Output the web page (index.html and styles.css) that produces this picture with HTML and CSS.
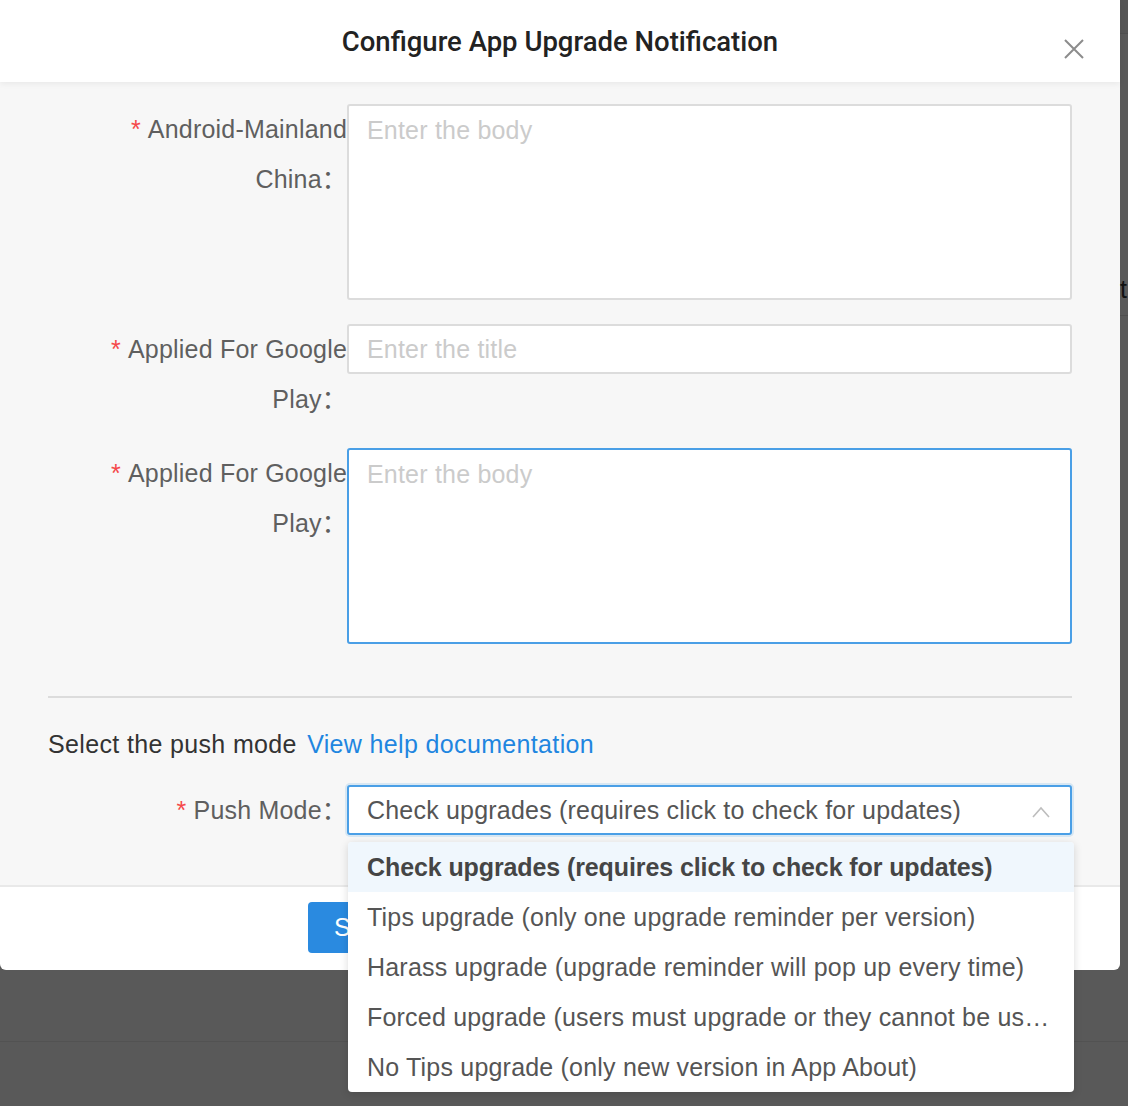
FILE: index.html
```html
<!DOCTYPE html>
<html lang="en">
<head>
    <meta charset="UTF-8">
    <meta name="viewport" content="width=device-width, initial-scale=1.0">
    <title>Configure App Upgrade Notification</title>
    <link rel="stylesheet" href="styles.css">
</head>
<body>

<div class="screen">
    <!-- Modal -->
    <div class="modal">
        <div class="modal-header">
            <h2 class="modal-title">Configure App Upgrade Notification</h2>
            <span class="modal-close">
                <svg width="20" height="20" viewBox="0 0 20 20">
                    <path d="M1 1 L19 19 M19 1 L1 19" stroke="#8c8c8c" stroke-width="2" fill="none"/>
                </svg>
            </span>
        </div>

        <div class="modal-body">
            <div class="form-row">
                <label class="form-label"><span class="req">*</span>Android-Mainland China：</label>
                <textarea class="form-textarea" placeholder="Enter the body"></textarea>
            </div>

            <div class="form-row">
                <label class="form-label"><span class="req">*</span>Applied For Google Play：</label>
                <input class="form-input" type="text" placeholder="Enter the title">
            </div>

            <div class="form-row">
                <label class="form-label"><span class="req">*</span>Applied For Google Play：</label>
                <textarea class="form-textarea hover" placeholder="Enter the body"></textarea>
            </div>

            <hr class="divider">

            <div class="section-title">
                Select the push mode <a class="help-link" href="#">View help documentation</a>
            </div>

            <div class="form-row last">
                <label class="form-label"><span class="req">*</span>Push Mode：</label>
                <div class="select-wrap">
                    <div class="select open">
                        <span class="select-value">Check upgrades (requires click to check for updates)</span>
                        <svg class="select-arrow" width="18" height="12" viewBox="0 0 18 12">
                            <path d="M1 11 L9 2 L17 11" stroke="#bdbdbd" stroke-width="1.6" fill="none"/>
                        </svg>
                    </div>
                    <!-- Dropdown menu -->
                    <ul class="dropdown">
                        <li class="selected">Check upgrades (requires click to check for updates)</li>
                        <li>Tips upgrade (only one upgrade reminder per version)</li>
                        <li>Harass upgrade (upgrade reminder will pop up every time)</li>
                        <li>Forced upgrade (users must upgrade or they cannot be used)</li>
                        <li>No Tips upgrade (only new version in App About)</li>
                    </ul>
                </div>
            </div>
        </div>

        <div class="modal-footer">
            <button class="btn-primary">Save</button>
        </div>
    </div>

    <!-- page behind the overlay -->
    <div class="peek">
        <div class="peek-top"></div>
        <div class="peek-text">t</div>
    </div>
    <div class="below"></div>
    <div class="below-rest"></div>
</div>

</body>
</html>
```

FILE: styles.css
```css
/* Page + overlay */
body {
    margin: 0;
    background-color: #595959;
    font-family: "Liberation Sans", Arial, "Noto Sans CJK SC", sans-serif;
    font-size: 25px;
    letter-spacing: 0.2px;
    color: #555;
}
.screen {
    display: grid;
    grid-template-columns: 1120px 1fr;
}

/* Modal */
.modal {
    background-color: #fff;
    border-radius: 0 0 6px 6px;
}
.modal-header {
    position: relative;
    z-index: 1;
    height: 82px;
    display: flex;
    align-items: center;
    justify-content: center;
    background-color: #fff;
    box-shadow: 0 2px 6px rgba(0, 0, 0, 0.06);
}
.modal-title {
    margin: 0;
    font-family: Roboto, "Liberation Sans", sans-serif;
    font-size: 27.5px;
    font-weight: 500;
    letter-spacing: 0;
    color: #222;
}
.modal-close {
    position: absolute;
    right: 36px;
    top: 36px;
    width: 20px;
    height: 20px;
}

.modal-body {
    background-color: #f7f7f7;
    padding: 22px 48px 50px 48px;
}

/* Form rows */
.form-row {
    display: flex;
    align-items: flex-start;
    margin-bottom: 24px;
}
.form-row.last {
    margin-bottom: 0;
}
.form-label {
    width: 299px;
    flex-shrink: 0;
    text-align: right;
    line-height: 50px;
    color: #5f5f5f;
}
.req {
    color: #f5484a;
    margin-right: 7px;
}

.form-textarea,
.form-input {
    flex: 1;
    box-sizing: border-box;
    margin: 0;
    border: 2px solid #dcdcdc;
    border-radius: 3px;
    background-color: #fff;
    font-family: inherit;
    font-size: 25px;
    letter-spacing: 0.2px;
    color: #555;
    outline: none;
}
.form-textarea {
    height: 196px;
    padding: 9px 18px;
    line-height: 30px;
    resize: none;
}
.form-input {
    height: 50px;
    padding: 0 18px;
}
.form-textarea.hover {
    border-color: #4a9fe6;
}
::placeholder {
    color: #cbcbcb;
}

.divider {
    border: none;
    border-top: 2px solid #dcdcdc;
    margin: 52px 0 21px 0;
}

.section-title {
    line-height: 50px;
    color: #333;
    letter-spacing: 0.35px;
    margin-bottom: 16px;
}
.help-link {
    color: #1f86e0;
    text-decoration: none;
    margin-left: 3px;
}

/* Select */
.select-wrap {
    flex: 1;
    position: relative;
}
.select {
    box-sizing: border-box;
    height: 50px;
    display: flex;
    align-items: center;
    justify-content: space-between;
    padding: 0 20px 0 18px;
    background-color: #fff;
    border: 2px solid #4a9fe6;
    border-radius: 3px;
    box-shadow: 0 0 0 2px rgba(74, 159, 230, 0.18);
    color: #555;
}
.select-arrow {
    margin-top: 4px;
}

.dropdown {
    position: absolute;
    z-index: 5;
    top: 57px;
    left: 1px;
    right: -2px;
    margin: 0;
    padding: 0;
    list-style: none;
    background-color: #fff;
    border-radius: 4px;
    box-shadow: 0 2px 8px rgba(0, 0, 0, 0.15);
    overflow: hidden;
}
.dropdown li {
    height: 50px;
    line-height: 50px;
    padding: 0 18px 0 19px;
    white-space: nowrap;
    overflow: hidden;
    text-overflow: ellipsis;
    color: #555;
}
.dropdown li.selected {
    background-color: #f0f7fd;
    font-weight: bold;
    letter-spacing: -0.1px;
    color: #454545;
}

/* Footer */
.modal-footer {
    border-top: 2px solid #e9e9e9;
    height: 85px;
    box-sizing: border-box;
    padding: 15px 0 0 308px;
    display: flex;
}
.btn-primary {
    height: 51px;
    padding: 0 26px;
    border: none;
    border-radius: 4px;
    background-color: #2a8ae0;
    font-family: inherit;
    font-size: 25px;
    color: #fff;
}

/* Page behind the overlay */
.peek {
    border-bottom: 1px solid #4f4f4f;
    height: 315px;
}
.peek-top {
    height: 33px;
    background-color: #555;
    border-bottom: 1px solid #4f4f4f;
}
.peek-text {
    padding-top: 240px;
    line-height: 30px;
    color: #111;
}
.below {
    grid-column: 1 / span 2;
    height: 71px;
    border-bottom: 1px solid #525252;
}
.below-rest {
    grid-column: 1 / span 2;
    height: 64px;
}
```
